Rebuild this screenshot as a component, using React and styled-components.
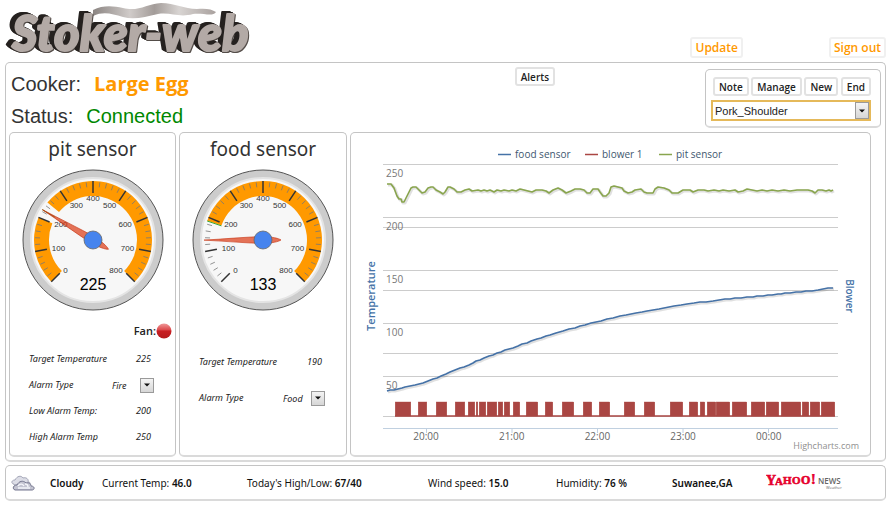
import React from "react";
import styled, { createGlobalStyle } from "styled-components";

const BODY_FONT = '"Open Sans", "Noto Sans", sans-serif';
const TEXT_FONT = '"Noto Sans", "Open Sans", sans-serif';
const LABEL_FONT = '"Liberation Sans", Arial, sans-serif';

const GlobalStyle = createGlobalStyle`
  *, *::before, *::after { box-sizing: border-box; }
  body {
    margin: 0;
    background: #fff;
    color: #333;
    font-family: ${BODY_FONT};
    font-size: 10px;
  }
`;

const Page = styled.div`
  display: flex;
  flex-direction: column;
  padding: 0 4px 0 5px;
`;

const Header = styled.header`
  display: flex;
  align-items: flex-end;
  height: 62px;
  padding-bottom: 4px;
`;

const Logo = styled.h1`
  flex: 1;
  margin: 0;
  line-height: 0;
`;

const Actions = styled.nav`
  display: flex;
  gap: 86px;
`;

const HeaderButton = styled.button`
  height: 21px;
  padding: 0 3px;
  border: 2px solid #f0f0f0;
  border-radius: 3px;
  background: #fff;
  color: #ff9900;
  font: 600 12px/16px ${BODY_FONT};
  white-space: nowrap;
`;

const Panel = styled.section`
  min-width: 0;
  border: 1px solid #c4c4c4;
  border-bottom: 2px solid #dadada;
  border-radius: 5px;
  background: #fff;
`;

const MainPanel = styled(Panel)`
  padding: 0 0 3px 3px;
`;

const CookerBar = styled.div`
  display: grid;
  grid-template-columns: 505fr 190fr 176px;
  align-items: start;
  height: 69px;
  padding-right: 4px;
`;

const StatusList = styled.dl`
  margin: 5px 0 0 2px;
  font: 20px/24px ${LABEL_FONT};
`;

const StatusRow = styled.div`
  display: flex;
  align-items: center;
  gap: 13px;
  height: 32px;

  dt { color: #333; }
  dd { margin: 0; }
`;

const CookerName = styled.dd`
  color: #ff9900;
  font: 700 20px/24px ${BODY_FONT};
`;

const ConnectionState = styled.dd`
  color: #008800;
`;

const SmallButton = styled.button`
  justify-self: start;
  height: 19px;
  margin-top: ${(p) => (p.$offset ? "4px" : "0")};
  padding: 0 4px;
  border: 2px solid #e2e2e2;
  border-radius: 3px;
  background: #fff;
  color: #222;
  font: 600 10px/14px ${BODY_FONT};
`;

const SessionBox = styled(Panel)`
  margin-top: 6px;
  padding: 7px 9px 5px 5px;
`;

const SessionButtons = styled.div`
  display: flex;
  justify-content: space-between;
  padding-left: 2px;
  margin-bottom: 4px;
`;

const SelectFrame = styled.span`
  position: relative;
  display: ${(p) => (p.$wide ? "block" : "inline-block")};
`;

const SessionSelect = styled.select`
  display: block;
  appearance: none;
  width: 100%;
  height: 21px;
  padding: 0 18px 0 2px;
  border: 2px solid #e5b95a;
  border-radius: 0;
  background: #fff;
  color: #222;
  font: 11px/16px ${LABEL_FONT};
`;

const AlarmSelect = styled.select`
  display: block;
  appearance: none;
  height: 15px;
  width: 42px;
  padding: 0;
  border: 0;
  background: transparent;
  color: #222;
  font: italic 9px/15px ${TEXT_FONT};
`;

const ArrowBox = styled.span`
  position: absolute;
  top: ${(p) => (p.$inset ? "2px" : "0")};
  right: ${(p) => (p.$inset ? "2px" : "0")};
  bottom: ${(p) => (p.$inset ? "2px" : "0")};
  display: flex;
  align-items: center;
  justify-content: center;
  width: 14px;
  border: 1px solid #9a9a9a;
  background: linear-gradient(#f4f4f4, #d6d6d6);
  pointer-events: none;
`;

const Panels = styled.div`
  display: grid;
  grid-template-columns: 167fr 168fr 521fr;
  gap: 3px;
  padding-right: 14px;
`;

const SensorPanel = styled(Panel)`
  display: flex;
  flex-direction: column;
  align-items: center;
  min-height: 325px;
`;

const SensorTitle = styled.h2`
  margin: 2px 0 6px;
  color: #333;
  font: 400 19px/28px ${TEXT_FONT};
`;

const GaugeSvg = styled.svg`
  display: block;
  width: 142px;
  height: 142px;
`;

const FanRow = styled.div`
  display: flex;
  align-items: center;
  align-self: stretch;
  justify-content: flex-end;
  height: 34px;
  margin-top: 3px;
  padding-right: 3px;
  color: #222;
  font: 600 11px/16px ${BODY_FONT};
`;

const Settings = styled.div`
  align-self: stretch;
  display: grid;
  grid-auto-rows: ${(p) => (p.$loose ? "36px" : "26px")};
  margin-top: ${(p) => (p.$loose ? "33px" : "-2px")};
  padding: 0 21px 0 19px;
`;

const Setting = styled.div`
  display: flex;
  align-items: center;
  justify-content: space-between;
  color: #222;
  font: italic 9px/14px ${TEXT_FONT};
`;

const Value = styled.output`
  padding-right: 3px;
`;

const ChartPanel = styled(Panel)`
  display: flex;
`;

const ChartSvg = styled.svg`
  display: block;
  width: 100%;
  height: auto;
  font-family: ${BODY_FONT};
`;

const WeatherBar = styled(Panel)`
  display: grid;
  grid-template-columns: 39fr 52fr 145fr 181fr 128fr 116fr 94fr 119fr;
  align-items: center;
  min-height: 36px;
  margin-top: 3px;
  padding-left: 5px;
  color: #111;
  font: 10px/16px ${TEXT_FONT};
  white-space: nowrap;

  b { font-weight: 600; }
  svg { display: block; }
`;

const polar = (value, r) => {
  const a = ((-135 + value * 0.3375) * Math.PI) / 180;
  return [Math.sin(a) * r, -Math.cos(a) * r];
};

const band = (from, to) => {
  const [x1, y1] = polar(from, 59);
  const [x2, y2] = polar(to, 59);
  const [x3, y3] = polar(to, 44);
  const [x4, y4] = polar(from, 44);
  const large = (to - from) * 0.3375 > 180 ? 1 : 0;
  return `M${x1} ${y1}A59 59 0 ${large} 1 ${x2} ${y2}L${x3} ${y3}A44 44 0 ${large} 0 ${x4} ${y4}Z`;
};

function Tick({ value, from, to, ...rest }) {
  const [x1, y1] = polar(value, from);
  const [x2, y2] = polar(value, to);
  return <line x1={x1} y1={y1} x2={x2} y2={y2} {...rest} />;
}

function Gauge({ name, value, bands, target }) {
  const ticks = Array.from({ length: 41 }, (_, i) => i * 20);
  return (
    <GaugeSvg viewBox="-71 -71 142 142" role="img" aria-label={`${name} ${value}`}>
      <circle r="70" fill="#ccc" stroke="#555" strokeWidth="1" />
      <circle r="62" fill="#f7f7f7" stroke="#e4e4e4" strokeWidth="2" />
      {bands.map(([a, b]) => (
        <path key={a} d={band(a, b)} fill="#ff9900" />
      ))}
      <Tick value={target} from={59} to={44} stroke="#35a835" strokeWidth="1" />
      {ticks.map((t) =>
        t % 100 === 0 ? (
          <Tick key={t} value={t} from={59} to={47} stroke="#333" strokeWidth="1.5" />
        ) : (
          <Tick key={t} value={t} from={58} to={53} stroke="#777" strokeWidth="0.8" />
        )
      )}
      {[0, 100, 200, 300, 400, 500, 600, 700, 800].map((t) => {
        const [x, y] = polar(t, 42);
        const anchor = t < 400 ? "start" : t > 400 ? "end" : "middle";
        return (
          <text key={t} x={x} y={y + 3} textAnchor={anchor} fontFamily={LABEL_FONT} fontSize="8" fill="#333">
            {t}
          </text>
        );
      })}
      <text y="50" textAnchor="middle" fontFamily={LABEL_FONT} fontSize="16" fill="#000">
        {value}
      </text>
      <path
        d="M0 -59C1 -40 3 -18 3.5 0C3 9 2 15 0 18C-2 15 -3 9 -3.5 0C-3 -18 -1 -40 0 -59Z"
        fill="#dc3912"
        fillOpacity="0.7"
        stroke="#c63310"
        strokeWidth="0.6"
        transform={`rotate(${-135 + value * 0.3375})`}
      />
      <circle r="9" fill="#4684ee" stroke="#666" strokeWidth="0.8" />
    </GaugeSvg>
  );
}

function Arrow({ inset }) {
  return (
    <ArrowBox $inset={inset} aria-hidden="true">
      <svg width="6" height="4" viewBox="0 0 6 4">
        <path d="M0 0.5H6L3 3.5Z" fill="#111" />
      </svg>
    </ArrowBox>
  );
}

function AlarmType({ id, value }) {
  return (
    <Setting>
      <label htmlFor={id}>Alarm Type</label>
      <SelectFrame>
        <AlarmSelect id={id} defaultValue={value}>
          <option>Fire</option>
          <option>Food</option>
        </AlarmSelect>
        <Arrow />
      </SelectFrame>
    </Setting>
  );
}

function Reading({ label, children }) {
  return (
    <Setting>
      <span>{label}</span>
      <Value>{children}</Value>
    </Setting>
  );
}

const PIT_LINE =
  "387,184 391,184 394,188 397,196 399,199 401,199 402,202 404,202 407,196 411,188 413,187 416,187 419,190 422,193 425,192 428,188 431,187 433,187 436,190 440,192 443,194 445,192 448,187 450,187 454,189 457,192 461,192 465,190 469,189 472,191 478,190 481,191 484,190 487,191 490,190 494,192 497,190 501,191 504,190 509,191 512,190 516,191 520,189 524,190 528,191 532,192 536,190 542,190 546,191 549,193 553,190 558,188 562,190 566,193 571,191 575,189 580,189 584,190 587,193 590,193 593,189 598,189 600,192 603,196 606,196 609,193 611,187 614,186 618,187 622,188 624,191 628,193 632,192 635,190 641,189 644,192 647,193 653,193 655,189 658,187 664,188 669,190 672,193 678,193 683,190 690,190 693,192 698,190 704,190 708,191 714,190 719,191 723,190 729,191 735,190 738,192 743,191 747,189 752,190 757,191 762,190 767,191 772,190 778,191 784,190 790,191 797,190 803,190 808,190 812,191 815,193 818,190 822,190 826,191 829,190 831,191 833,190";

const FOOD_LINE =
  "387,391 390,390 394,390 398,389 402,388 405,387 410,386 415,385 419,384 423,383 428,381 433,379 437,378 441,376 446,374 450,372 455,370 460,368 464,367 469,365 473,363 476,361 480,360 484,358 489,356 493,355 497,353 501,352 505,350 509,349 513,348 518,346 522,344 527,343 531,341 537,339 541,338 546,336 550,335 556,333 563,331 569,329 575,328 580,326 585,325 591,323 596,322 601,321 607,319 613,318 620,316 626,315 631,314 636,313 642,312 647,311 653,310 659,309 664,308 669,307 674,306 681,305 687,304 694,303 700,302 706,302 713,301 719,300 725,299 730,299 735,298 741,298 747,297 753,297 757,296 763,296 768,295 772,295 778,294 781,294 785,293 790,293 796,292 801,292 806,291 812,291 818,290 823,289 828,288 833,288";

const BLOWER_RUNS = [
  [395, 411], [418, 427], [436, 447], [455, 465], [468, 475], [476, 478], [479, 486], [487, 497],
  [498, 503], [504, 510], [513, 520], [526, 538], [545, 553], [562, 574], [583, 592], [599, 610],
  [624, 635], [644, 655], [670, 683], [689, 698], [700, 705], [707, 716], [716, 730], [732, 747],
  [751, 765], [766, 779], [781, 801], [802, 809], [810, 820], [821, 835],
];

const LEGEND = [
  [498, "#4572a7", "food sensor"],
  [585, "#aa4643", "blower 1"],
  [659, "#89a54e", "pit sensor"],
];

function Chart() {
  return (
    <ChartSvg viewBox="351 133 519 322" role="img" aria-label="Temperature and blower history">
      {[164, 217, 227, 270, 290, 323, 353, 376, 416].map((y) => (
        <line key={y} x1="383" x2="838" y1={y + 0.5} y2={y + 0.5} stroke="#ccc" />
      ))}
      {[250, 200, 150, 100, 50].map((t, i) => (
        <text key={t} x="386" y={177 + i * 53} fontSize="10" fill="#777">
          {t}
        </text>
      ))}
      <path d="M383 428.5H838" stroke="#c0d0e0" />
      {["20:00", "21:00", "22:00", "23:00", "00:00"].map((t, i) => (
        <g key={t}>
          <path d={`M${426.5 + i * 85.5} 428V433`} stroke="#c0d0e0" />
          <text x={426 + i * 85.7} y="440" textAnchor="middle" fontSize="10" fill="#666">
            {t}
          </text>
        </g>
      ))}
      {LEGEND.map(([x, color, label]) => (
        <g key={label}>
          <path d={`M${x} 154.5H${x + 13}`} stroke={color} strokeWidth="1.5" />
          <text x={x + 17} y="158" fontSize="10" fill="#3e576f">
            {label}
          </text>
        </g>
      ))}
      <path d="M395 416H835" stroke="#aa4643" strokeWidth="1.5" />
      {BLOWER_RUNS.map(([a, b]) => (
        <rect key={a} x={a + 0.2} y="402" width={b - a - 0.4} height="14" fill="#aa4643" stroke="#aa4643" strokeWidth="0.4" />
      ))}
      <g fill="none" strokeLinejoin="round">
        <polyline points={PIT_LINE} stroke="#000" strokeOpacity="0.12" strokeWidth="3" transform="translate(1 1)" />
        <polyline points={FOOD_LINE} stroke="#000" strokeOpacity="0.12" strokeWidth="3" transform="translate(1 1)" />
        <polyline points={PIT_LINE} stroke="#89a54e" strokeWidth="1.6" />
        <polyline points={FOOD_LINE} stroke="#4572a7" strokeWidth="1.6" />
      </g>
      <text transform="translate(375 296) rotate(-90)" textAnchor="middle" fontSize="11" fontWeight="600" fill="#4572a7">
        Temperature
      </text>
      <text transform="translate(846 296) rotate(90)" textAnchor="middle" fontSize="10" fontWeight="600" fill="#4572a7">
        Blower
      </text>
      <text x="859" y="449" textAnchor="end" fontSize="9" fill="#909090">
        Highcharts.com
      </text>
    </ChartSvg>
  );
}

const LogoWord = styled.text`
  font: italic 900 49px Lato, "Open Sans", sans-serif;
  fill: #b3aaa6;
  stroke: #b3aaa6;
  stroke-width: 2px;
  stroke-linejoin: round;
  filter: drop-shadow(-1px 0 0 #25211f) drop-shadow(-2px -1px 0 #25211f) drop-shadow(-2px -1px 0 #25211f)
    drop-shadow(1px 1px 0 #544d49);
`;

function StokerLogo() {
  return (
    <svg width="256" height="58" viewBox="0 0 256 58" role="img" aria-label="Stoker-web">
      <defs>
        <linearGradient id="smoke">
          <stop offset="0" stopColor="#8b8582" />
          <stop offset="0.3" stopColor="#d0cbc9" />
          <stop offset="0.5" stopColor="#a39c99" />
          <stop offset="0.7" stopColor="#d8d4d2" />
          <stop offset="1" stopColor="#a9a19e" />
        </linearGradient>
      </defs>
      <path
        d="M88 10C98 5 108 6 118 8C133 12 142 4 156 3C170 3 179 9 192 9C200 8 207 9 211 12C208 17 199 13 188 14C174 18 166 12 153 14C140 17 129 20 118 17C107 14 99 11 88 16Z"
        fill="url(#smoke)"
      />
      <LogoWord x="7" y="51">Stoker-web</LogoWord>
    </svg>
  );
}

function CloudIcon() {
  return (
    <svg width="24" height="16" viewBox="0 0 24 16" role="img" aria-label="Cloudy">
      <path d="M3 9C0 9 0 5 4 5C6 1 10 0 12 3C15 2 18 4 17 7C20 7 20 10 18 10H3Z" fill="#dcdde6" stroke="#a5a7b8" />
      <path d="M4 15C1 14 2 10 6 10C8 6 12 5 15 8C18 7 20 9 20 11C24 11 24 15 21 15Z" fill="#c3c4d1" stroke="#75778f" />
      <path d="M7 11C9 8 12 9 13 11M14 9C16 9 17 10 17 12M7 13H19" fill="none" stroke="#f4f5fa" strokeWidth="1.3" />
    </svg>
  );
}

function YahooLogo() {
  return (
    <svg width="78" height="18" viewBox="0 0 78 18" role="img" aria-label="Yahoo! News Weather">
      <g fontFamily='"Liberation Serif", serif' fontWeight="700" fill="#e6002d" stroke="#e6002d" strokeWidth="0.6">
        <text x="0" y="11" fontSize="14">Y</text>
        <text x="9" y="11" fontSize="11">A</text>
        <text x="17" y="10" fontSize="11">H</text>
        <text x="26" y="10" fontSize="11">O</text>
        <text x="35" y="10" fontSize="12">O</text>
        <text x="45" y="10" fontSize="14">!</text>
      </g>
      <g fontFamily={BODY_FONT} fill="#666">
        <text x="52" y="10" fontSize="8" fontWeight="600">NEWS</text>
        <text x="60" y="15" fontSize="4">Weather</text>
      </g>
    </svg>
  );
}

function FanLight() {
  return (
    <svg width="16" height="16" viewBox="0 0 16 16" role="img" aria-label="Fan off">
      <defs>
        <linearGradient id="lamp" x2="0" y2="1">
          <stop offset="0" stopColor="#f09a9a" />
          <stop offset="0.42" stopColor="#dc4a4c" />
          <stop offset="0.5" stopColor="#c81e22" />
          <stop offset="1" stopColor="#b51a1c" />
        </linearGradient>
      </defs>
      <circle cx="8" cy="8" r="7.5" fill="url(#lamp)" />
    </svg>
  );
}

export default function App() {
  return (
    <Page>
      <GlobalStyle />
      <Header>
        <Logo><StokerLogo /></Logo>
        <Actions>
          <HeaderButton>Update</HeaderButton>
          <HeaderButton>Sign out</HeaderButton>
        </Actions>
      </Header>
      <MainPanel as="main">
        <CookerBar>
          <StatusList>
            <StatusRow>
              <dt>Cooker:</dt>
              <CookerName>Large Egg</CookerName>
            </StatusRow>
            <StatusRow>
              <dt>Status:</dt>
              <ConnectionState>Connected</ConnectionState>
            </StatusRow>
          </StatusList>
          <SmallButton $offset>Alerts</SmallButton>
          <SessionBox>
            <SessionButtons>
              <SmallButton>Note</SmallButton>
              <SmallButton>Manage</SmallButton>
              <SmallButton>New</SmallButton>
              <SmallButton>End</SmallButton>
            </SessionButtons>
            <SelectFrame $wide>
              <SessionSelect aria-label="Cook session" defaultValue="Pork_Shoulder">
                <option>Pork_Shoulder</option>
              </SessionSelect>
              <Arrow inset />
            </SelectFrame>
          </SessionBox>
        </CookerBar>
        <Panels>
          <SensorPanel>
            <SensorTitle>pit sensor</SensorTitle>
            <Gauge name="pit sensor" value={225} target={225} bands={[[0, 200], [250, 800]]} />
            <FanRow>Fan:<FanLight /></FanRow>
            <Settings>
              <Reading label="Target Temperature">225</Reading>
              <AlarmType id="pit-alarm" value="Fire" />
              <Reading label="Low Alarm Temp:">200</Reading>
              <Reading label="High Alarm Temp">250</Reading>
            </Settings>
          </SensorPanel>
          <SensorPanel>
            <SensorTitle>food sensor</SensorTitle>
            <Gauge name="food sensor" value={133} target={189} bands={[[190, 800]]} />
            <Settings $loose>
              <Reading label="Target Temperature">190</Reading>
              <AlarmType id="food-alarm" value="Food" />
            </Settings>
          </SensorPanel>
          <ChartPanel><Chart /></ChartPanel>
        </Panels>
      </MainPanel>
      <WeatherBar as="footer">
        <CloudIcon />
        <b>Cloudy</b>
        <span>Current Temp: <b>46.0</b></span>
        <span>Today's High/Low: <b>67/40</b></span>
        <span>Wind speed: <b>15.0</b></span>
        <span>Humidity: <b>76 %</b></span>
        <b>Suwanee,GA</b>
        <YahooLogo />
      </WeatherBar>
    </Page>
  );
}
